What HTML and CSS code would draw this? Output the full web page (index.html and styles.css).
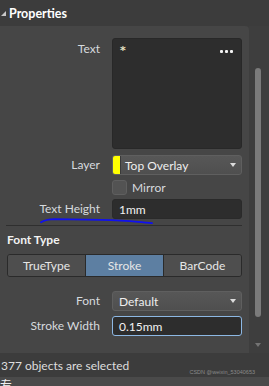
FILE: index.html
```html
<!DOCTYPE html>
<html>
<head>
<meta charset="utf-8">
<link rel="stylesheet" href="styles.css">
</head>
<body>
<div class="app">
  <div class="header"><span class="tri"></span><span>Properties</span></div>
  <div class="body">
    <div class="panel">
      <div class="row row-top">
        <div class="label label-top">Text</div>
        <div class="textbox">
          <span class="ast">*</span>
          <span class="dots"><i></i><i></i><i></i></span>
        </div>
      </div>
      <div class="row row-layer">
        <div class="label">Layer</div>
        <div class="select select-layer">
          <span class="swatch"></span>
          <span class="sel-text">Top Overlay</span>
          <span class="arrow"></span>
        </div>
      </div>
      <div class="row row-gap2">
        <div class="label"></div>
        <div class="check"><span class="box"></span><span>Mirror</span></div>
      </div>
      <div class="row row-gap2">
        <div class="label">Text Height</div>
        <div class="input">1mm</div>
      </div>
      <div class="sep"></div>
      <div class="section">Font Type</div>
      <div class="seg">
        <div class="seg-item">TrueType</div>
        <div class="seg-item active">Stroke</div>
        <div class="seg-item">BarCode</div>
      </div>
      <div class="row row-font">
        <div class="label">Font</div>
        <div class="select">
          <span class="sel-text">Default</span>
          <span class="arrow"></span>
        </div>
      </div>
      <div class="row row-gap5">
        <div class="label">Stroke Width</div>
        <div class="input focus">0.15mm</div>
      </div>
    </div>
    <div class="scroll">
      <div class="thumb"></div>
      <div class="down"></div>
    </div>
  </div>
  <div class="status">
    <span>377 objects are selected</span>
    <span class="wm">CSDN @weixin_53040653</span>
  </div>
  <div class="bottom"><span class="cjk">专</span></div>
  <svg class="mark" width="120" height="10" viewBox="0 0 120 10">
    <path d="M3 6.2 C6 4.2 10 3.2 17 3.1 L62 3.8 C80 4.2 92 5 100 5.8 C106 6.3 110 6.8 114 7.1" fill="none" stroke="#1010f0" stroke-width="1.8" stroke-linecap="round"/>
  </svg>
</div>
</body>
</html>
```

FILE: styles.css
```css
html, body {
  margin: 0;
  padding: 0;
  background: #3c3c3c;
}

.app {
  position: relative;
  width: 269px;
  height: 386px;
  overflow: hidden;
  display: flex;
  flex-direction: column;
  background: #3c3c3c;
  font-family: Lato, "Noto Sans", sans-serif;
  font-size: 12px;
  color: #d6dade;
}

.header {
  flex: 0 0 26px;
  display: flex;
  align-items: center;
  padding-left: 1px;
  font-weight: bold;
  font-size: 12.5px;
  color: #ffffff;
}

.tri {
  width: 0;
  height: 0;
  border-left: 5px solid transparent;
  border-bottom: 5px solid #c8c8c8;
  margin-right: 3px;
  margin-top: 1px;
}

.body {
  flex: 0 0 327px;
  display: flex;
}

.panel {
  width: 249px;
  box-sizing: border-box;
  background: #464646;
  border-top-right-radius: 4px;
  padding: 12px 7px 0 0;
  display: flex;
  flex-direction: column;
}

.row {
  display: flex;
  align-items: center;
  height: 20px;
}

.row-top {
  align-items: flex-start;
  height: auto;
}

.row-layer { margin-top: 6px; }
.row-gap2 { margin-top: 2px; }
.row-font { margin-top: 14px; }
.row-gap5 { margin-top: 5px; }

.label {
  flex: 0 0 100px;
  margin-right: 12px;
  text-align: right;
  line-height: 16px;
  white-space: nowrap;
}

.label-top {
  padding-top: 3px;
}

.textbox {
  flex: 1;
  height: 111px;
  box-sizing: border-box;
  background: #2d2d2d;
  border: 1px solid #282828;
  border-radius: 3px;
  display: flex;
  justify-content: space-between;
  align-items: flex-start;
  padding: 4px 8px 0 7px;
}

.ast {
  color: #e8e2c4;
  font-family: "DejaVu Sans", sans-serif;
  font-size: 11px;
  font-weight: bold;
  line-height: 16px;
}

.dots {
  display: flex;
  gap: 2px;
  margin-top: 7px;
}

.dots i {
  display: block;
  width: 3px;
  height: 3px;
  border-radius: 1px;
  background: #f2f2f2;
}

.select {
  flex: 1;
  height: 20px;
  box-sizing: border-box;
  background: linear-gradient(#575757, #4f4f4f);
  border: 1px solid #5f5f5f;
  border-radius: 3px;
  display: flex;
  align-items: center;
  padding: 0 5px 0 6px;
  color: #eeeeee;
}

.select-layer {
  padding-left: 0;
}

.swatch {
  align-self: stretch;
  width: 7px;
  background: #ffff00;
  border-radius: 2px 0 0 2px;
  border-right: 1px solid #3a3a3a;
  margin-right: 4px;
}

.sel-text {
  flex: 1;
  white-space: nowrap;
}

.arrow {
  width: 0;
  height: 0;
  border-left: 3px solid transparent;
  border-right: 3px solid transparent;
  border-top: 4px solid #dcdcdc;
}

.check {
  display: flex;
  align-items: center;
  gap: 5px;
}

.box {
  width: 15px;
  height: 15px;
  box-sizing: border-box;
  background: #535353;
  border: 1px solid #5f5f5f;
  border-radius: 3px;
}

.input {
  flex: 1;
  height: 20px;
  box-sizing: border-box;
  background: #2d2d2d;
  border: 1px solid #2a2a2a;
  border-radius: 3px;
  display: flex;
  align-items: center;
  padding-left: 6px;
  color: #f2f2f2;
}

.input.focus {
  border-color: #8db8e4;
}

.sep {
  height: 1px;
  margin: 6px 0 0 6px;
  background: #2f2f2f;
}

.section {
  margin: 6px 0 0 7px;
  line-height: 16px;
  font-weight: bold;
  color: #f2f2f2;
}

.seg {
  display: flex;
  height: 23px;
  box-sizing: border-box;
  margin: 6px 0 0 7px;
  border: 1px solid #2a2a2a;
  border-radius: 3px;
  overflow: hidden;
}

.seg-item {
  flex: 1;
  display: flex;
  align-items: center;
  justify-content: center;
  background: #4e4e4e;
  color: #e6e6e6;
}

.seg-item + .seg-item {
  border-left: 1px solid #2a2a2a;
}

.seg-item.active {
  background: #5d7fa2;
}

.scroll {
  flex: 1;
  background: #3e3e3e;
  display: flex;
  flex-direction: column;
  padding: 42px 0 0 6px;
}

.thumb {
  width: 6px;
  height: 249px;
  border-radius: 3px;
  background: #7b7b7b;
}

.down {
  width: 0;
  height: 0;
  margin-top: 26px;
  border-left: 3px solid transparent;
  border-right: 3px solid transparent;
  border-top: 4px solid #747474;
}

.status {
  flex: 0 0 24px;
  display: flex;
  justify-content: space-between;
  align-items: center;
  padding: 0 14px 0 1px;
  background: #3c3c3c;
  color: #dedede;
}

.wm {
  align-self: flex-end;
  margin-bottom: 2px;
  font-size: 5.5px;
  color: #8a8a8a;
  font-family: "Liberation Sans", sans-serif;
}

.bottom {
  flex: 0 0 9px;
  background: #4a4a4a;
  overflow: hidden;
}

.cjk {
  display: block;
  margin-top: 1px;
  font-family: "Noto Sans CJK SC", sans-serif;
  font-size: 12px;
  line-height: 14px;
  color: #f0f0f0;
}

.mark {
  position: absolute;
  left: 38px;
  top: 216px;
}
```
